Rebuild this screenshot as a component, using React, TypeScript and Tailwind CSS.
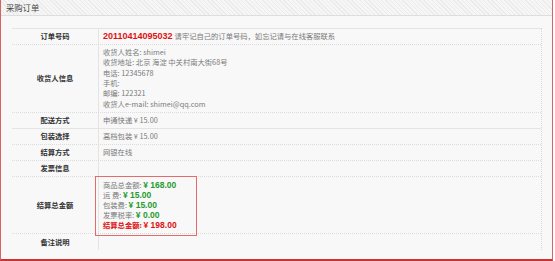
import React from "react";

// ---------------------------------------------------------------------------
// Data
// ---------------------------------------------------------------------------

const receiver = [
  "收货人姓名: shimei",
  "收货地址: 北京 海淀 中关村南大街68号",
  "电话: 12345678",
  "手机:",
  "邮编: 122321",
  "收货人e-mail: shimei@qq.com",
];

const amounts = [
  { label: "商品总金额:", value: "¥ 168.00" },
  { label: "运 费:", value: "¥ 15.00" },
  { label: "包装费:", value: "¥ 15.00" },
  { label: "发票税率:", value: "¥ 0.00" },
];

// ---------------------------------------------------------------------------
// Pieces
// ---------------------------------------------------------------------------

function Row({
  label,
  children,
  className = "",
}: {
  label: string;
  children?: React.ReactNode;
  className?: string;
}) {
  return (
    <div className={["flex", className].join(" ")}>
      <div className="flex w-[87px] shrink-0 items-center justify-center border-r border-[#e4e4e4] text-[7.3px] font-bold text-[#333]">
        {label}
      </div>
      <div className="flex flex-1 items-center pl-[4px] text-[7.3px] text-[#7a7a7a]">
        {children}
      </div>
    </div>
  );
}

function Dotted() {
  return <div className="border-b border-dotted border-[#dcdcdc]" />;
}

function Solid() {
  return <div className="h-px bg-[#e4e4e4]" />;
}

// ---------------------------------------------------------------------------
// Page
// ---------------------------------------------------------------------------

export default function App() {
  return (
    <div className="h-[261px] w-[555px] bg-white font-['Noto_Sans_CJK_SC',sans-serif]">
      <div className="flex h-[261px] w-[553px] flex-col border-x border-b-2 border-[#d96363] border-b-[#c73434] bg-[#f8f8f8]">
        {/* Title bar */}
        <div className="flex h-[16px] items-center border-b border-[#dedede] bg-[repeating-linear-gradient(45deg,#ebebeb_0px,#ebebeb_1px,#f6f6f6_1px,#f6f6f6_3px)] pl-[5px] text-[8.3px] text-[#444]">
          采购订单
        </div>

        <div className="pl-[11px] pr-[10px] pt-[12px]">
          <div className="border-r border-dotted border-[#d8d8d8]">
            <Solid />

            <Row label="订单号码" className="h-[15px]">
              <span className="font-['Liberation_Sans',sans-serif] text-[9px] font-bold text-[#e01010]">
                20110414095032
              </span>
              <span className="ml-[2px]">请牢记自己的订单号码，如忘记请与在线客服联系</span>
            </Row>
            <Dotted />

            <Row label="收货人信息" className="h-[67px]">
              <div className="flex flex-col pb-[3px] pt-[2px] leading-[10.3px]">
                {receiver.map((line) => (
                  <span key={line}>{line}</span>
                ))}
              </div>
            </Row>
            <Dotted />

            <Row label="配送方式" className="h-[15px]">
              申通快递 ¥ 15.00
            </Row>
            <Solid />

            <Row label="包装选择" className="h-[15px]">
              高档包装 ¥ 15.00
            </Row>
            <Dotted />

            <Row label="结算方式" className="h-[15px]">
              网银在线
            </Row>
            <Dotted />

            <Row label="发票信息" className="h-[15px]" />
            <Dotted />

            <Row label="结算总金额" className="h-[56px]">
              <div className="relative z-10 -mb-[4px] -ml-[8px] -mt-px flex h-[60px] w-[102px] flex-col self-start border border-[#e56a6a] pl-[7px] pt-[3px] leading-[10px]">
                {amounts.map((a) => (
                  <span key={a.label}>
                    {a.label}{" "}
                    <b className="font-['Liberation_Sans',sans-serif] text-[8.5px] text-[#1f9a30]">
                      {a.value}
                    </b>
                  </span>
                ))}
                <span className="font-bold text-[#dd1111]">
                  结算总金额:{" "}
                  <b className="font-['Liberation_Sans',sans-serif] text-[8.5px]">¥ 198.00</b>
                </span>
              </div>
            </Row>
            <Dotted />

            <Row label="备注说明" className="h-[16px]" />
          </div>
        </div>
      </div>
    </div>
  );
}
